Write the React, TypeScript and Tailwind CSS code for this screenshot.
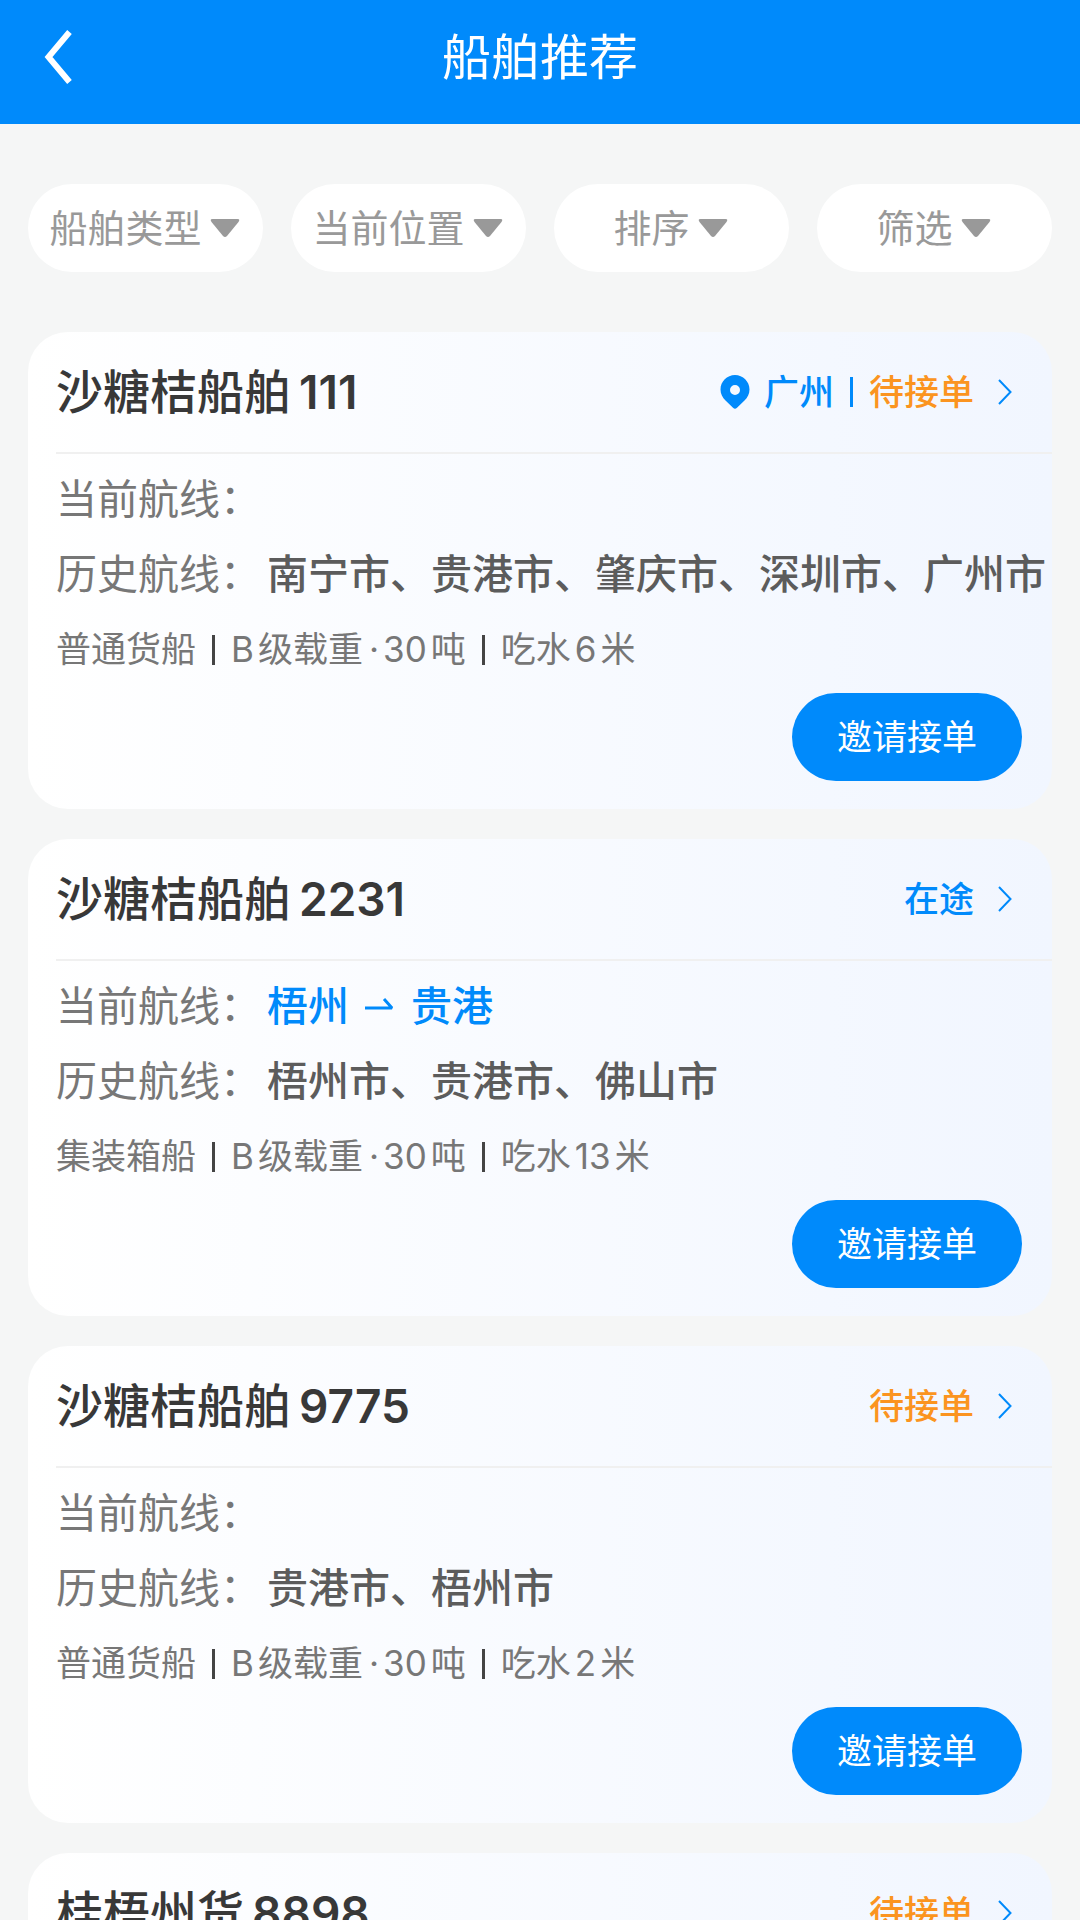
type Ship = {
  name: string;
  no: string;
  place?: string;
  status: string;
  waiting: boolean;
  route?: [string, string];
  history: string[];
  type: string;
  load: string;
  draft: string;
};

const filters = ["船舶类型", "当前位置", "排序", "筛选"];

const ships: Ship[] = [
  {
    name: "沙糖桔船舶",
    no: "111",
    place: "广州",
    status: "待接单",
    waiting: true,
    history: ["南宁市", "贵港市", "肇庆市", "深圳市", "广州市"],
    type: "普通货船",
    load: "30",
    draft: "6",
  },
  {
    name: "沙糖桔船舶",
    no: "2231",
    status: "在途",
    waiting: false,
    route: ["梧州", "贵港"],
    history: ["梧州市", "贵港市", "佛山市"],
    type: "集装箱船",
    load: "30",
    draft: "13",
  },
  {
    name: "沙糖桔船舶",
    no: "9775",
    status: "待接单",
    waiting: true,
    history: ["贵港市", "梧州市"],
    type: "普通货船",
    load: "30",
    draft: "2",
  },
  {
    name: "桂梧州货",
    no: "8898",
    status: "待接单",
    waiting: true,
    history: ["梧州市", "贵港市"],
    type: "普通货船",
    load: "30",
    draft: "3",
  },
];

function BackIcon() {
  return (
    <svg width="28" height="56" viewBox="0 0 28 56" fill="none">
      <path d="M25.500 2L4.500 27L25.500 52" stroke="white" strokeWidth="6" />
    </svg>
  );
}

function CaretIcon() {
  return (
    <svg width="30" height="20" viewBox="0 0 30 20" fill="#999999">
      <path d="M2.5 1H27.5Q30.5 1 28.5 4L17 18Q15 20 13 18L1.5 4Q-.5 1 2.5 1Z" />
    </svg>
  );
}

function PinIcon() {
  return (
    <svg width="30" height="34" viewBox="0 0 30 34" fill="#008afb">
      <path
        fillRule="evenodd"
        d="M15 0C7 0 .5 6.5.5 14.500C.5 19 2.500 22.500 5.500 25.500L13 32.800Q15 34.500 17 32.800L24.500 25.500C27.500 22.500 29.500 19 29.500 14.500C29.500 6.500 23 0 15 0ZM15 10A5 5 0 1 1 15 20A5 5 0 1 1 15 10Z"
      />
    </svg>
  );
}

function ChevronIcon() {
  return (
    <svg width="14" height="26" viewBox="0 0 14 26" fill="none">
      <path d="M1 1L12.500 13L1 25" stroke="#008afb" strokeWidth="2" />
    </svg>
  );
}

function RouteArrow() {
  return (
    <svg width="30" height="20" viewBox="0 0 30 20" fill="none">
      <path d="M0 11H27L19 2" stroke="#008afb" strokeWidth="3" strokeLinejoin="bevel" />
    </svg>
  );
}

function ShipCard({ ship }: { ship: Ship }) {
  return (
    <article className="overflow-hidden rounded-[40px] bg-gradient-to-r from-white to-[#f1f6ff] pb-7 pl-7">
      {/* Card header */}
      <div className="flex items-center justify-between border-b-2 border-[#f0f0f0] pt-6 pb-6 pr-10">
        <h2 className="flex items-center gap-2 text-[47px] leading-[72px] font-medium text-[#383838]">
          <span>{ship.name}</span>
          <span className="text-[46px] font-semibold">{ship.no}</span>
        </h2>
        <a
          href="#"
          className="flex items-center text-[35px] leading-[48px] font-medium text-[#008afb]"
        >
          {ship.place && (
            <>
              <PinIcon />
              <span className="ml-3.5">{ship.place}</span>
              <span className="mx-4 h-[30px] w-[3px] bg-[#008afb]" />
            </>
          )}
          <span className={ship.waiting ? "text-[#fb9420]" : "text-[#008afb]"}>
            {ship.status}
          </span>
          <span className="ml-6">
            <ChevronIcon />
          </span>
        </a>
      </div>

      {/* Routes */}
      <dl className="pt-2 text-[41px] leading-[75px] whitespace-nowrap">
        <div className="flex">
          <dt className="text-[#777777]">当前航线：</dt>
          {ship.route && (
            <dd className="flex items-center gap-4 pl-1.5 font-medium text-[#008afb]">
              <span>{ship.route[0]}</span>
              <RouteArrow />
              <span>{ship.route[1]}</span>
            </dd>
          )}
        </div>
        <div className="flex">
          <dt className="text-[#777777]">历史航线：</dt>
          <dd className="pl-1.5 font-medium text-[#5c5c5c]">
            {ship.history.join("、")}
          </dd>
        </div>
      </dl>

      <div className="flex items-center text-[35px] leading-[75px] text-[#777777]">
        <span>{ship.type}</span>
        <span className="mx-4 h-[30px] w-[3px] bg-[#444444]" />
        <span className="flex gap-1">
          <span>B</span>
          <span>级载重</span>
          <span className="pl-0.5">·</span>
          <span>{ship.load}</span>
          <span>吨</span>
        </span>
        <span className="mx-4 h-[30px] w-[3px] bg-[#444444]" />
        <span className="flex gap-1">
          <span>吃水</span>
          <span>{ship.draft}</span>
          <span>米</span>
        </span>
      </div>

      <div className="flex justify-end pt-1.5 pr-[30px]">
        <button
          type="button"
          className="rounded-full bg-[#008afb] px-[45px] py-5 text-[35px] leading-[48px] text-white"
        >
          邀请接单
        </button>
      </div>
    </article>
  );
}

export default function App() {
  return (
    <div className="min-h-screen bg-[#f5f6f6] font-['Inter','Noto_Sans_CJK_SC',sans-serif]">
      <header className="grid grid-cols-[1fr_auto_1fr] items-center bg-[#008afb] px-11 pt-5 pb-7 text-white">
        <button type="button" aria-label="返回" className="justify-self-start">
          <BackIcon />
        </button>
        <h1 className="text-[49px] leading-[76px]">船舶推荐</h1>
      </header>

      <main className="px-7">
        {/* Filters */}
        <div className="grid grid-cols-4 gap-7 pt-15">
          {filters.map((label) => (
            <button
              key={label}
              type="button"
              className="flex items-center justify-center gap-2 rounded-full bg-white py-5 pr-0.5 text-[38px] leading-[48px] whitespace-nowrap text-[#999999]"
            >
              {label}
              <CaretIcon />
            </button>
          ))}
        </div>

        {/* Ship list */}
        <div className="flex flex-col gap-[30px] pt-15 pb-7">
          {ships.map((ship) => (
            <ShipCard key={ship.no} ship={ship} />
          ))}
        </div>
      </main>
    </div>
  );
}
